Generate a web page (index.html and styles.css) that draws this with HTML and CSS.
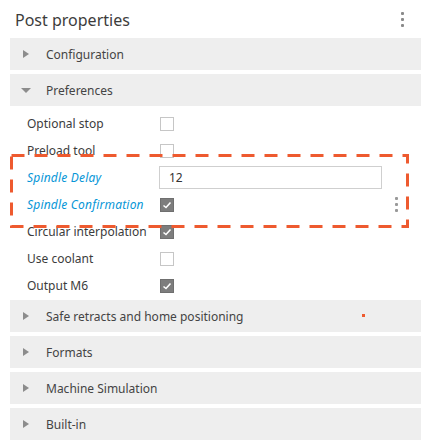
FILE: index.html
```html
<!DOCTYPE html>
<html>
<head>
<meta charset="utf-8">
<link rel="stylesheet" href="styles.css">
</head>
<body>
<div class="panel">
  <div class="title-bar">
    <span class="title">Post properties</span>
    <span class="kebab"><i></i><i></i><i></i></span>
  </div>
  <div class="sections">
    <div class="band"><span class="tri right"></span><span>Configuration</span></div>
    <div class="band"><span class="tri down"></span><span>Preferences</span></div>
    <div class="content">
      <div class="row"><span class="label">Optional stop</span><span class="cb"></span></div>
      <div class="row"><span class="label">Preload tool</span><span class="cb"></span></div>
      <div class="row"><span class="label hl">Spindle Delay</span><span class="input">12</span></div>
      <div class="row"><span class="label hl">Spindle Confirmation</span><span class="cb on"><svg viewBox="0 0 14 14" width="14" height="14"><path d="M3.5 7.5 L6 9.5 L10.5 4.5" fill="none" stroke="#fff" stroke-width="1.6"/></svg></span><span class="kebab small"><i></i><i></i><i></i></span></div>
      <div class="row"><span class="label">Circular interpolation</span><span class="cb on"><svg viewBox="0 0 14 14" width="14" height="14"><path d="M3.5 7.5 L6 9.5 L10.5 4.5" fill="none" stroke="#fff" stroke-width="1.6"/></svg></span></div>
      <div class="row"><span class="label">Use coolant</span><span class="cb"></span></div>
      <div class="row"><span class="label">Output M6</span><span class="cb on"><svg viewBox="0 0 14 14" width="14" height="14"><path d="M3.5 7.5 L6 9.5 L10.5 4.5" fill="none" stroke="#fff" stroke-width="1.6"/></svg></span></div>
      <svg class="dashbox" width="400" height="75" viewBox="0 0 400 75"><rect x="1.5" y="1.5" width="396" height="71" fill="none" stroke="#ee5a2f" stroke-width="3" stroke-dasharray="13 10"/></svg>
    </div>
    <div class="band"><span class="tri right"></span><span>Safe retracts and home positioning</span><span class="dot"></span></div>
    <div class="band"><span class="tri right"></span><span>Formats</span></div>
    <div class="band"><span class="tri right"></span><span>Machine Simulation</span></div>
    <div class="band"><span class="tri right"></span><span>Built-in</span></div>
  </div>
</div>
</body>
</html>
```
FILE: styles.css
```css
html, body { margin: 0; padding: 0; background: #fff; }
body { font-family: "Noto Sans", "Open Sans", sans-serif; color: #3c3c3c; }
.panel { width: 428px; height: 447px; overflow: hidden; }
.title-bar { height: 38px; display: flex; align-items: center; justify-content: space-between; padding: 0 24px 0 15px; box-sizing: border-box; }
.title { font-size: 16px; color: #3c3c3c; margin-top: 2px; }
.kebab { display: flex; flex-direction: column; gap: 3px; }
.kebab i { display: block; width: 3px; height: 3px; background: #8a8a8a; border-radius: 1px; }
.sections { margin: 0 7px 0 10px; display: flex; flex-direction: column; gap: 4px; }
.band { height: 32px; background: #eeeeee; display: flex; align-items: center; font-size: 12px; color: #444; position: relative; }
.tri { width: 0; height: 0; margin-left: 13px; margin-right: 18px; }
.tri.right { border-top: 4.5px solid transparent; border-bottom: 4.5px solid transparent; border-left: 6px solid #8c8c8c; margin-right: 17px; }
.tri.down { border-left: 5px solid transparent; border-right: 5px solid transparent; border-top: 5px solid #8c8c8c; margin-left: 11px; margin-right: 15px; }
.dot { position: absolute; left: 352px; top: 14px; width: 3px; height: 3px; background: #ee5a2f; }
.content { position: relative; padding: 0 0 0 17px; margin-bottom: -3px; }
.row { height: 27px; display: flex; align-items: center; font-size: 12px; color: #3c3c3c; position: relative; }
.label { width: 133px; flex: none; }
.label.hl { color: #0696d7; font-style: italic; letter-spacing: 0.2px; }
.cb { width: 14px; height: 14px; box-sizing: border-box; border: 1px solid #c6c6c6; background: #fff; display: block; }
.cb.on { background: #7d7d7d; border-color: #6f6f6f; }
.cb svg { display: block; margin: -1px; }
.input { width: 223px; height: 23px; box-sizing: border-box; border: 1px solid #cfcfcf; font-size: 12px; color: #333; display: flex; align-items: center; padding-left: 9px; margin-left: -1px; }
.kebab.small { position: absolute; left: 368px; top: 6px; gap: 3px; }
.kebab.small i { width: 3px; height: 3px; background: #999; }
.dashbox { position: absolute; left: 0; top: 44px; }
```
